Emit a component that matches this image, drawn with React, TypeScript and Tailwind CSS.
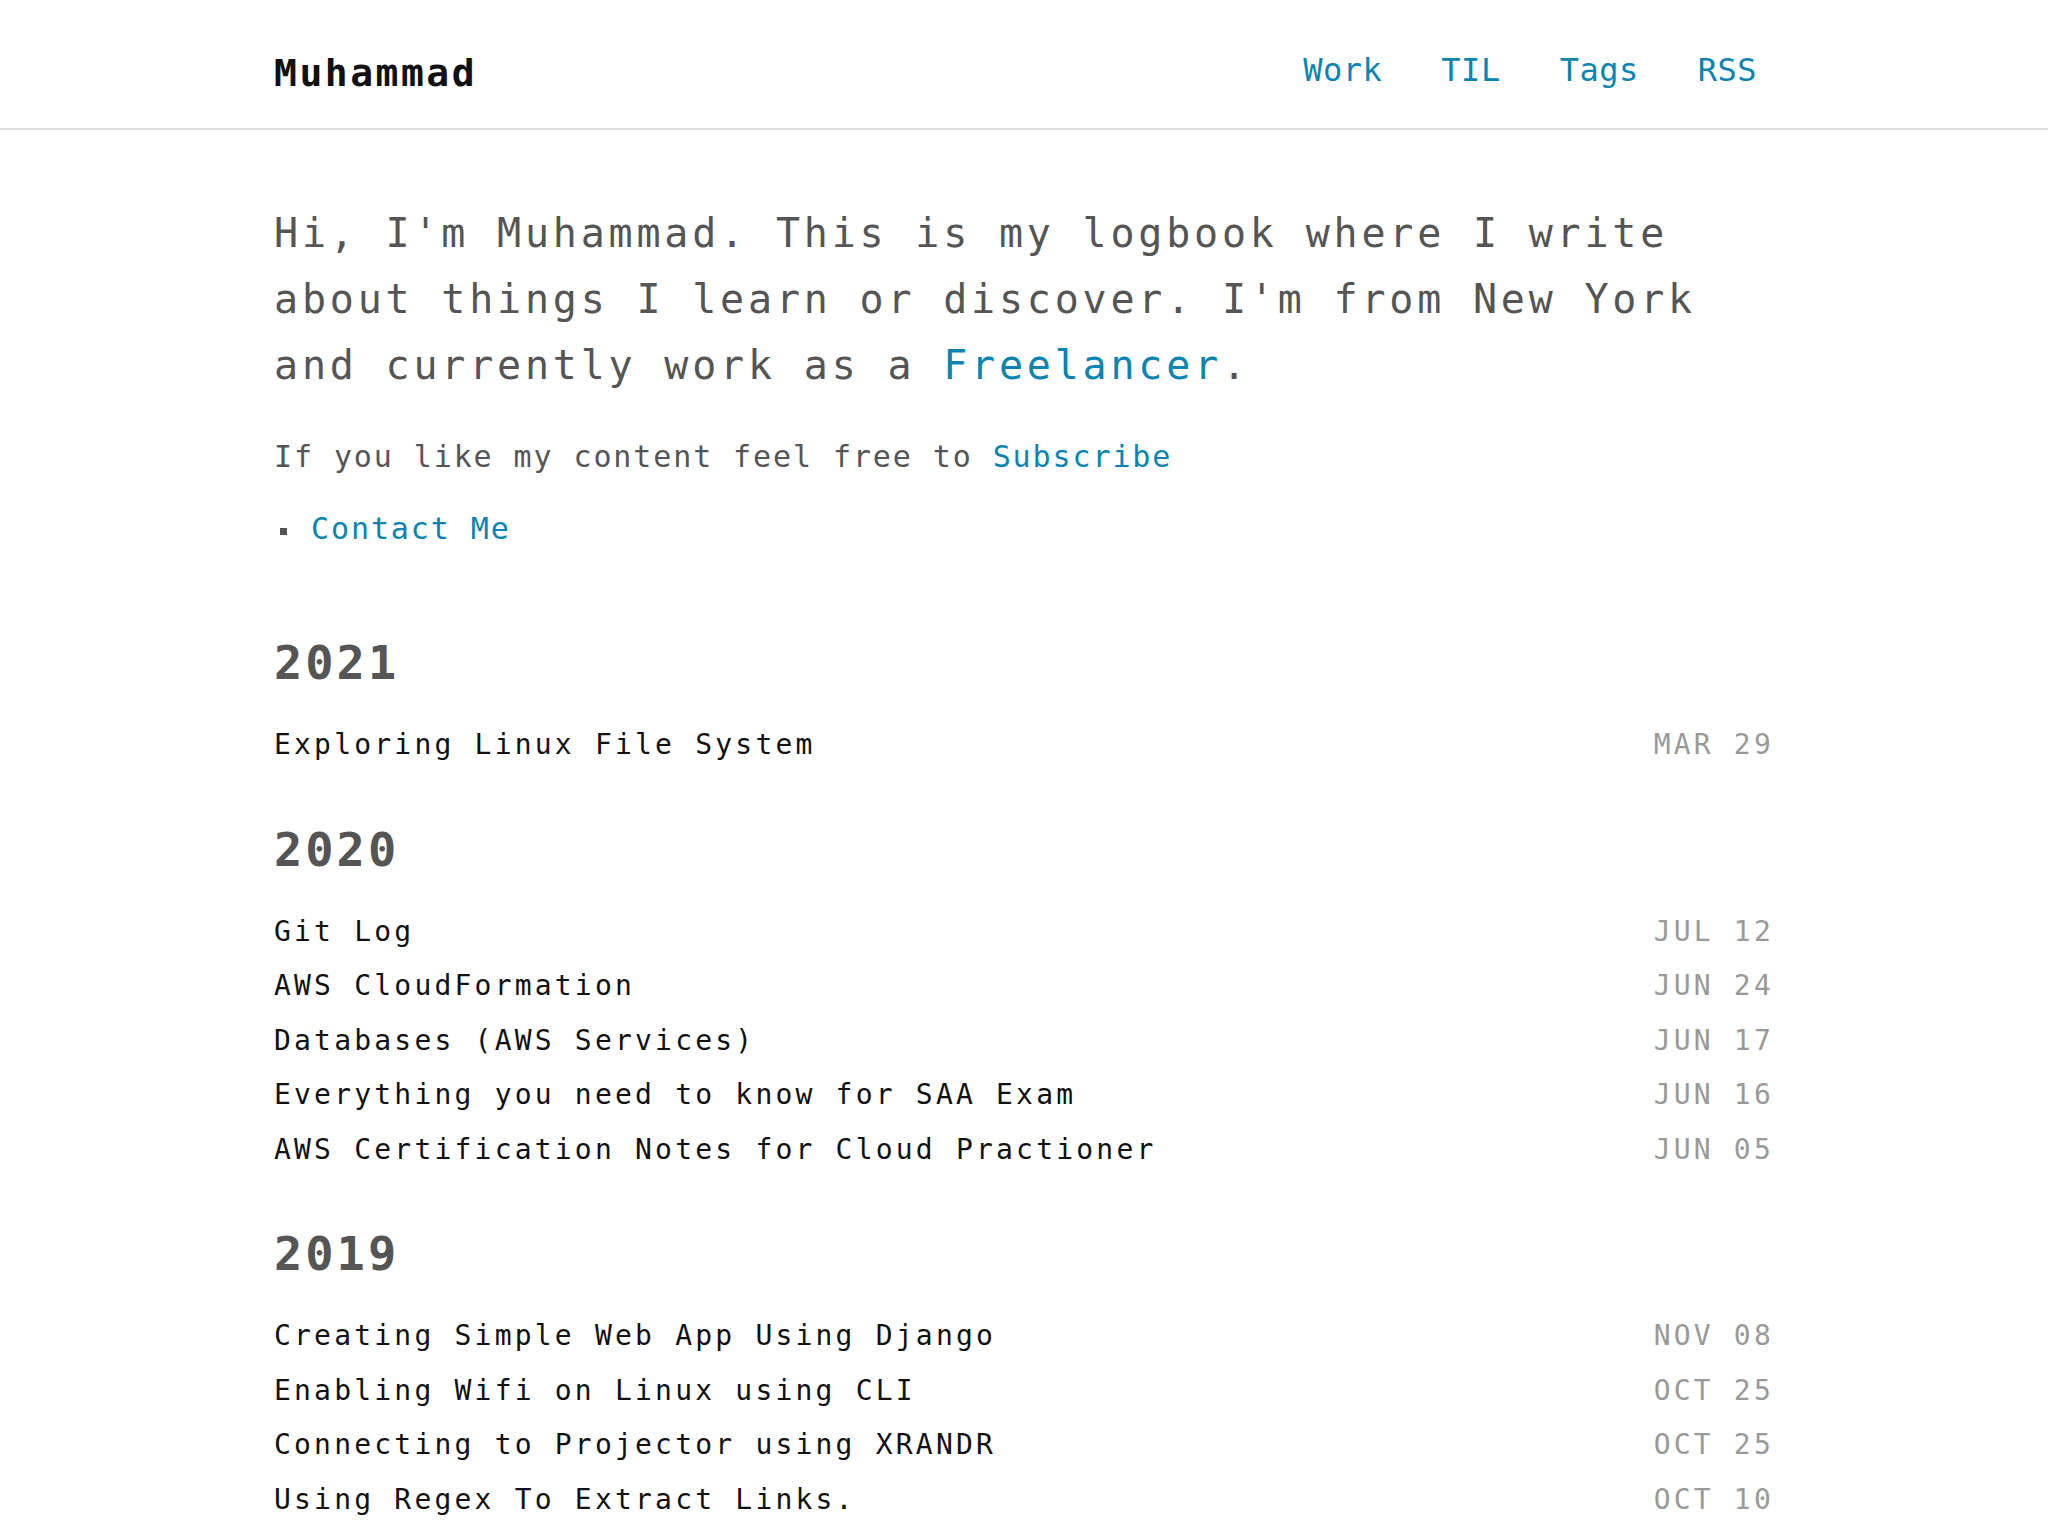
const posts = [
  {
    year: "2021",
    items: [{ title: "Exploring Linux File System", date: "Mar 29" }],
  },
  {
    year: "2020",
    items: [
      { title: "Git Log", date: "Jul 12" },
      { title: "AWS CloudFormation", date: "Jun 24" },
      { title: "Databases (AWS Services)", date: "Jun 17" },
      { title: "Everything you need to know for SAA Exam", date: "Jun 16" },
      { title: "AWS Certification Notes for Cloud Practioner", date: "Jun 05" },
    ],
  },
  {
    year: "2019",
    items: [
      { title: "Creating Simple Web App Using Django", date: "Nov 08" },
      { title: "Enabling Wifi on Linux using CLI", date: "Oct 25" },
      { title: "Connecting to Projector using XRANDR", date: "Oct 25" },
      { title: "Using Regex To Extract Links.", date: "Oct 10" },
    ],
  },
];

const navLinks = ["Work", "TIL", "Tags", "RSS"];

export default function App() {
  return (
    <div className="min-h-screen bg-white font-['DejaVu_Sans_Mono',monospace]">
      <header className="border-b-2 border-[#dcdcdc]">
        <div className="w-[1500px] mx-auto h-[128px] pt-[18px] flex items-center justify-between">
          <a href="#" className="text-[38px] font-bold tracking-[2.5px] text-[#111]">
            Muhammad
          </a>
          <nav className="flex gap-[59px] pr-[17px] mb-[6px]">
            {navLinks.map((link) => (
              <a
                key={link}
                href="#"
                className="text-[32px] tracking-[0.5px] text-[#0b84b1]"
              >
                {link}
              </a>
            ))}
          </nav>
        </div>
      </header>

      <main className="w-[1500px] mx-auto pt-[70px] pb-[60px]">
        <p className="text-[40px] leading-[66px] tracking-[3.8px] text-[#555]">
          Hi, I'm Muhammad. This is my logbook where I write about things I
          learn or discover. I'm from New York and currently work as a{" "}
          <a href="#" className="text-[#0b84b1]">
            Freelancer
          </a>
          .
        </p>
        <p className="mt-[36px] text-[30px] leading-[45px] tracking-[1.9px] text-[#555]">
          If you like my content feel free to{" "}
          <a href="#" className="text-[#0b84b1]">
            Subscribe
          </a>
        </p>
        <ul className="mt-[27px]">
          <li className="flex items-center text-[30px] leading-[45px] tracking-[1.9px]">
            <span className="w-[7px] h-[7px] bg-[#555] ml-[6px] mr-[24px] mt-[6px]" />
            <a href="#" className="text-[#0b84b1]">
              Contact Me
            </a>
          </li>
        </ul>

        <div className="mt-[85px]">
          {posts.map((group, i) => (
            <section key={group.year} className={i > 0 ? "mt-[50px]" : ""}>
              <h2 className="text-[47px] leading-[54px] font-bold tracking-[3px] text-[#555]">
                {group.year}
              </h2>
              <ul className="mt-[28px]">
                {group.items.map((item) => (
                  <li
                    key={item.title}
                    className="flex justify-between text-[28px] leading-[54.5px] tracking-[3.2px]"
                  >
                    <a href="#" className="text-[#111]">
                      {item.title}
                    </a>
                    <span className="uppercase text-[#999]">{item.date}</span>
                  </li>
                ))}
              </ul>
            </section>
          ))}
        </div>
      </main>
    </div>
  );
}
